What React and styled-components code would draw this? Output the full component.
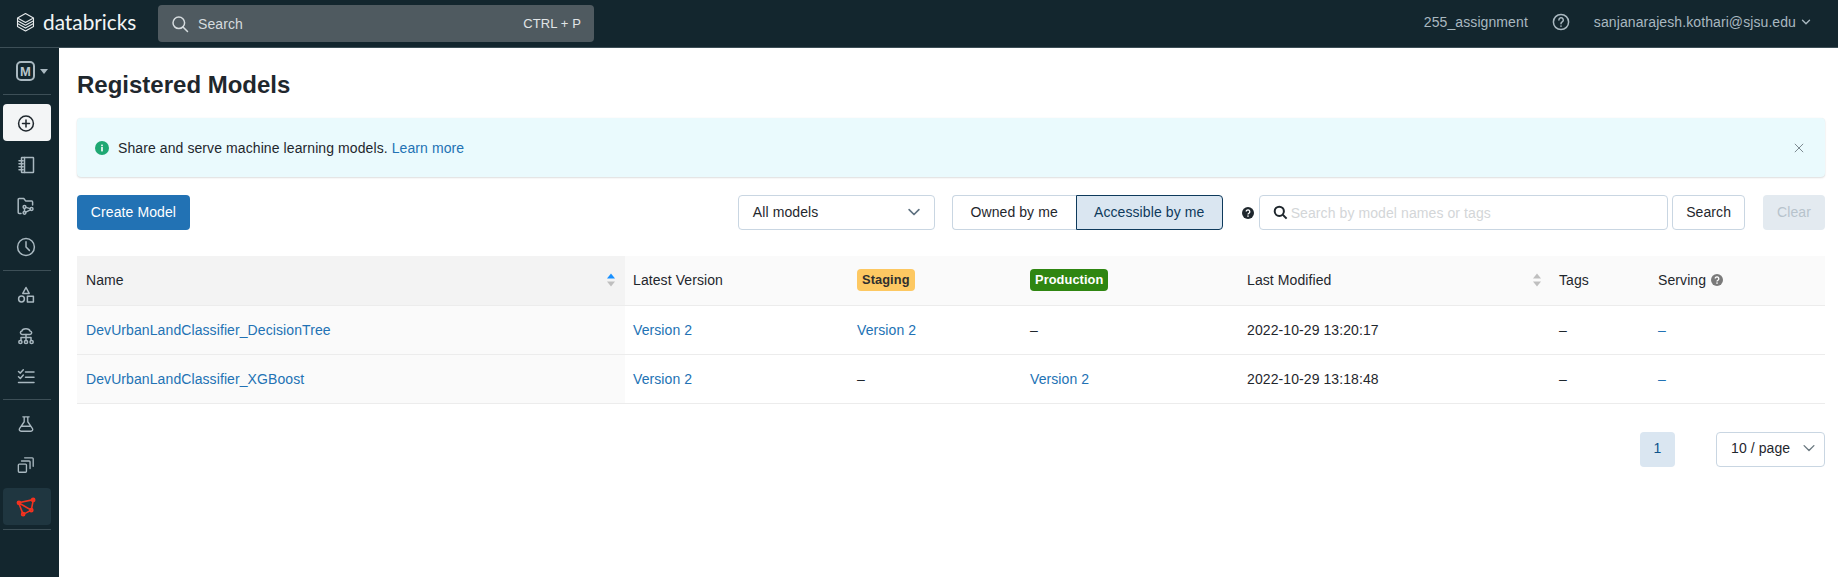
import React from "react";
import styled, { createGlobalStyle } from "styled-components";

const Global = createGlobalStyle`
  html, body { margin: 0; padding: 0; background: #fff; }
  body { font-family: "Liberation Sans", Arial, sans-serif; font-size: 14px; letter-spacing: .09px; color: #1f272d; }
  * { box-sizing: border-box; }
`;

const Page = styled.div`
  width: 1838px; height: 577px; overflow: hidden;
  display: flex; flex-direction: column;
`;
const TopBar = styled.header`
  height: 48px; flex: none; background: #13262e; border-bottom: 1px solid #3d4f57;
  display: flex; align-items: center; padding: 0 27px 3px 16px;
`;
const Logo = styled.div`
  width: 142px; flex: none; display: flex; align-items: center; gap: 8px; color: #f2f5f6;
`;
const LogoText = styled.span`
  font-family: Lato, sans-serif; font-size: 20.8px; letter-spacing: 0; font-weight: 400;
  line-height: 24px;
`;
const GlobalSearch = styled.div`
  width: 436px; height: 37px; margin-top: 3px; border-radius: 4px; background: #4f5a60;
  display: flex; align-items: center; padding: 0 13px; color: #d6dcdf;
  font-size: 14px; gap: 9px;
`;
const Shortcut = styled.span`
  margin-left: auto; font-size: 13px; color: #e1e5e7;
`;
const TopRight = styled.div`
  margin-left: auto; display: flex; align-items: center; color: #a9b8c0; font-size: 14px;
`;
const Workspace = styled.span` margin-right: 24px; `;
const HelpWrap = styled.span` display: flex; margin-right: 24px; `;
const Caret = styled.span` display: flex; margin-left: 5px; `;

const Body = styled.div` flex: 1; display: flex; min-height: 0; `;
const Sidebar = styled.nav`
  width: 59px; flex: none; background: #13262e; padding: 0 8px 0 3px;
  display: flex; flex-direction: column; align-items: stretch;
`;
const Persona = styled.div`
  height: 46px; display: flex; align-items: center; padding: 0 0 0 13px; gap: 5px; color: #a9b8c0;
`;
const PersonaBox = styled.span`
  width: 19px; height: 20px; border: 2px solid #a9b8c0; border-radius: 5px; color: #b9c5cb;
  display: flex; align-items: center; justify-content: center;
  font-size: 13px; font-weight: 700; line-height: 1; letter-spacing: 0;
`;
const PersonaCaret = styled.span`
  width: 0; height: 0; border-left: 4px solid transparent; border-right: 4px solid transparent;
  border-top: 5px solid #a9b8c0;
`;
const Divider = styled.div` height: 1px; flex: none; background: #3d4f57; margin-top: ${p => p.$mt || 0}px; `;
const NavItem = styled.div`
  height: 37px; margin-top: ${p => p.$mt ?? 4}px; border-radius: 4px; flex: none; padding-right: 2px;
  display: flex; align-items: center; justify-content: center;
  color: ${p => (p.$current ? "#1f272d" : p.$active ? "#f4321f" : "#a9b8c0")};
  background: ${p => (p.$current ? "#f3f5f6" : p.$active ? "#1f3640" : "transparent")};
`;

const Main = styled.main` flex: 1; padding: 0 13px 0 18px; min-width: 0; `;
const Title = styled.h1`
  margin: 23px 0 0; font-size: 24px; line-height: 28px; font-weight: 700; color: #1f272d; letter-spacing: 0;
`;
const Alert = styled.div`
  margin-top: 19px; height: 59px; background: #eafafd; border-radius: 4px;
  box-shadow: 0 1px 2px rgba(0,0,0,.13), 0 0 1px rgba(0,0,0,.08);
  display: flex; align-items: center; padding: 0 21px 0 18px; gap: 9px; color: #1f272d;
`;
const Link = styled.a` color: #2272b4; text-decoration: none; `;
const CloseBtn = styled.span` margin-left: auto; display: flex; color: #7d8a91; `;
const Toolbar = styled.div` margin-top: 18px; display: flex; align-items: center; height: 35px; `;
const Primary = styled.button`
  width: 113px; height: 35px; padding: 0 0 2px; border: 0; border-radius: 4px; background: #2272b4; color: #fff;
  font: 14px "Liberation Sans", sans-serif; letter-spacing: .09px;
`;
const Select = styled.div`
  margin-left: 548px; width: 197px; height: 35px; border: 1px solid #c9d6e2; border-radius: 4px;
  display: flex; align-items: center; justify-content: space-between; padding: 0 13px 2px 14px; color: #1f272d;
`;
const SelectChev = styled.span` display: flex; color: #5f7281; `;
const Segment = styled.div` margin-left: 17px; display: flex; height: 35px; `;
const SegBtn = styled.button`
  height: 35px; width: ${p => p.$w}px; padding: 0 0 2px; font: 14px "Liberation Sans", sans-serif; letter-spacing: .09px;
  color: ${p => (p.$on ? "#0e3a5c" : "#1f272d")};
  background: ${p => (p.$on ? "#dae6f1" : "#fff")};
  border: 1px solid ${p => (p.$on ? "#0e3a5c" : "#c9d6e2")};
  border-radius: ${p => (p.$on ? "0 4px 4px 0" : "4px 0 0 4px")};
  ${p => !p.$on && "border-right: 0;"}
`;
const QMark = styled.span` margin-left: 19px; width: 12px; display: flex; color: #1f272d; `;
const SearchInput = styled.div`
  margin-left: 5px; width: 410px; height: 35px; border: 1px solid #c9d6e2; border-radius: 4px;
  display: flex; align-items: center; padding: 0 13px 0 13px; gap: 3px; color: #d3d6d8;
`;
const Secondary = styled.button`
  margin-left: 4px; width: 73px; height: 35px; padding: 0 0 2px; background: #fff; border: 1px solid #c9d6e2; border-radius: 4px;
  font: 14px "Liberation Sans", sans-serif; letter-spacing: .09px; color: #1f272d;
`;
const Disabled = styled.button`
  margin-left: 18px; width: 62px; height: 35px; padding: 0 0 2px; border: 0; background: #e3eaf0; border-radius: 4px;
  font: 14px "Liberation Sans", sans-serif; letter-spacing: .09px; color: #b7c3cc;
`;

const Table = styled.table`
  margin-top: 26px; width: 1748px; table-layout: fixed; border-collapse: collapse;
`;
const Th = styled.th`
  height: 49px; padding: 0 8px 0 ${p => (p.$sorted ? 9 : 8)}px; text-align: left; font-weight: 400; color: #1f272d;
  background: ${p => (p.$sorted ? "#f3f3f3" : "#fafafa")};
  border-bottom: 1px solid #ececec; position: relative;
`;
const Td = styled.td`
  height: 49px; padding: 0 8px 0 ${p => (p.$sorted ? 9 : 8)}px; color: #1f272d;
  background: ${p => (p.$sorted ? "#fafafa" : "#fff")};
  border-bottom: 1px solid #ececec;
`;
const SortIcon = styled.span`
  position: absolute; right: ${p => p.$r}px; top: 50%; transform: translateY(-50%);
  display: flex; flex-direction: column; gap: 3px;
`;
const Tri = styled.span`
  width: 0; height: 0; border-left: 4.5px solid transparent; border-right: 4.5px solid transparent;
  ${p => (p.$up ? "border-bottom" : "border-top")}: 5px solid ${p => p.$c};
`;
const Tag = styled.span`
  display: inline-block; height: 22px; line-height: 22px; padding: 0 5px; border-radius: 4px;
  font-size: 12.8px; font-weight: 700;
  background: ${p => p.$bg}; color: ${p => p.$fg};
`;
const ServingHelp = styled.span` display: inline-flex; vertical-align: -1px; margin-left: 5px; color: #7a7a7a; `;
const Pager = styled.div` margin-top: 28px; display: flex; justify-content: flex-end; align-items: center; `;
const PageNum = styled.div`
  width: 35px; height: 35px; padding-bottom: 2px; border-radius: 4px; background: #dae6f1; color: #0e538b;
  display: flex; align-items: center; justify-content: center;
`;
const PageSize = styled.div`
  margin-left: 41px; width: 109px; height: 35px; border: 1px solid #c9d6e2; border-radius: 4px;
  display: flex; align-items: center; justify-content: space-between; padding: 0 8px 2px 14px; color: #1f272d;
`;
const PageChev = styled.span` display: flex; color: #6b7980; `;

const S = { fill: "none", stroke: "currentColor", strokeWidth: 1.5, strokeLinecap: "round", strokeLinejoin: "round" };
const I = ({ size = 18, children, vb = "0 0 18 18" }) => <svg width={size} height={size} viewBox={vb} {...S}>{children}</svg>;

const DatabricksMark = () => (
  <svg width="19" height="20" viewBox="0 0 19 20" fill="none" stroke="#e6eaec" strokeWidth="1.1" strokeLinejoin="round">
    <path d="M9.5 1.5 17.5 6 9.5 10.5 1.5 6Z" />
    <path d="M1.5 6v2.8l8 4.5 8-4.5V6" />
    <path d="M1.5 8.8v2.8l8 4.5 8-4.5V8.8" />
    <path d="M1.5 11.6v2.8l8 4.5 8-4.5v-2.8" />
  </svg>
);
const SearchGlyph = () => <I size={18}><circle cx="7.8" cy="7.8" r="5.8" /><path d="m12 12 4.5 4.5" /></I>;
const HelpGlyph = () => (
  <I size={18}><circle cx="9" cy="9" r="7.6" /><path d="M6.9 7a2.2 2.2 0 1 1 3.3 1.9c-.8.5-1.2.9-1.2 1.8" /><path d="M9 13.1v.1" /></I>
);
const Chev = ({ size = 10, w = 1.4 }) => (
  <svg width={size} height={size} viewBox="0 0 10 10" fill="none" stroke="currentColor" strokeWidth={w} strokeLinecap="round" strokeLinejoin="round"><path d="M1.5 3.3 5 6.8l3.5-3.5" /></svg>
);
const PlusIcon = () => <I><circle cx="9" cy="9.5" r="7.4" /><path d="M9 6v7M5.5 9.5h7" /></I>;
const NotebookIcon = () => <I><rect x="4.5" y="1.5" width="12" height="15" rx=".5" /><path d="M7.5 1.5v15M2 4.8h4M2 7.8h4M2 10.8h4M2 13.8h4" /></I>;
const RepoIcon = () => (
  <I><path d="M4 16.5H2.2a1 1 0 0 1-1-1V2.5a1 1 0 0 1 1-1h4.6l1.8 2.4h6a1 1 0 0 1 1 1V8" /><circle cx="7.5" cy="10" r="1.4" /><circle cx="7.5" cy="15.8" r="1.4" /><circle cx="14.6" cy="12" r="1.4" /><path d="M7.5 11.4v3M13.4 12.8l-4.7 2.3M8.9 10.4l4.3 1.2" /></I>
);
const ClockIcon = () => <I size={20} vb="0 0 20 20"><circle cx="10" cy="10" r="8.4" /><path d="M10 4.8V10l3.4 3.4" /></I>;
const ShapesIcon = () => <I><path d="M9 1.5 12.2 7.4H5.8Z" /><circle cx="4.5" cy="13" r="2.9" /><rect x="10.4" y="10.2" width="6" height="5.8" /></I>;
const FeatureIcon = () => (
  <I><path d="M5 7.5C3 7 2.8 4.4 5 4c.4-2.8 7.2-3 8 0 2.3.5 2.2 3 0 3.5Z" /><path d="M9 7.5V13M4 13v-2.5h10V13" /><circle cx="3.4" cy="15" r="1.6" /><circle cx="9" cy="15" r="1.6" /><circle cx="14.6" cy="15" r="1.6" /></I>
);
const TasksIcon = () => <I><path d="m1.5 3.5 1.8 1.6 3-3.4M1.5 8.8l1.8 1.6 3-3.4M8.5 4H17M8.5 9.2H17M1.5 14.5H17" /></I>;
const FlaskIcon = () => <I size={18} vb="0 0 20 20"><path d="M6.5 2h7M8 2v5.5L2.8 15.2C2 16.6 3 18 4.5 18h11c1.5 0 2.5-1.4 1.7-2.8L12 7.5V2M5.2 12.5h9.6" /></I>;
const CopiesIcon = () => <I size={18} vb="0 0 20 20"><rect x="1.5" y="9" width="9" height="9" rx="1" /><path d="M5 5.5h8.5a1 1 0 0 1 1 1V14M8.5 2h8.5a1 1 0 0 1 1 1v8.5" /></I>;
const ModelIcon = () => (
  <I size={20} vb="0 0 19 19"><path d="M2.5 5.5 16.5 2.5 14.5 12.5 6.8 16.5Z M2.5 5.5 14.5 12.5" /><circle cx="2.8" cy="5.5" r="1.5" /><circle cx="16.3" cy="2.8" r="1.5" /><circle cx="14.5" cy="12.5" r="1.5" /><circle cx="6.8" cy="16.3" r="1.5" /></I>
);
const InfoDot = () => (
  <svg width="14" height="14" viewBox="0 0 14 14"><circle cx="7" cy="7" r="7" fill="#1fa873" /><rect x="6.2" y="6" width="1.6" height="4.4" fill="#fff" /><rect x="6.2" y="3.6" width="1.6" height="1.6" fill="#fff" /></svg>
);
const CloseIcon = () => <svg width="10" height="10" viewBox="0 0 12 12" fill="none" stroke="currentColor" strokeWidth="1.2"><path d="m1 1 10 10M11 1 1 11" /></svg>;
const QFill = ({ size = 12 }) => (
  <svg width={size} height={size} viewBox="0 0 12 12"><circle cx="6" cy="6" r="6" fill="currentColor" /><path d="M4.2 4.6a1.8 1.8 0 1 1 2.7 1.6c-.6.35-.9.6-.9 1.2" fill="none" stroke="#fff" strokeWidth="1.3" /><rect x="5.3" y="8.4" width="1.4" height="1.4" fill="#fff" /></svg>
);
const SearchSolid = () => <svg width="15" height="15" viewBox="0 0 15 15" fill="none" stroke="#1f272d" strokeWidth="2"><circle cx="6.3" cy="6.3" r="4.6" /><path d="m9.8 9.8 3.8 3.8" /></svg>;

const columns = [548, 224, 173, 217, 312, 99, 175];
const rows = [
  { name: "DevUrbanLandClassifier_DecisionTree", latest: "Version 2", staging: "Version 2", production: null, date: "2022-10-29 13:20:17" },
  { name: "DevUrbanLandClassifier_XGBoost", latest: "Version 2", staging: null, production: "Version 2", date: "2022-10-29 13:18:48" },
];
const VersionCell = ({ v }) => <Td>{v ? <Link>{v}</Link> : "–"}</Td>;

export default function App() {
  return (
    <Page>
      <Global />
      <TopBar>
        <Logo><DatabricksMark /><LogoText>databricks</LogoText></Logo>
        <GlobalSearch><SearchGlyph />Search<Shortcut>CTRL + P</Shortcut></GlobalSearch>
        <TopRight>
          <Workspace>255_assignment</Workspace>
          <HelpWrap><HelpGlyph /></HelpWrap>
          sanjanarajesh.kothari@sjsu.edu
          <Caret><Chev /></Caret>
        </TopRight>
      </TopBar>
      <Body>
        <Sidebar>
          <Persona><PersonaBox>M</PersonaBox><PersonaCaret /></Persona>
          <Divider />
          <NavItem $current $mt={9}><PlusIcon /></NavItem>
          <NavItem $mt={5}><NotebookIcon /></NavItem>
          <NavItem><RepoIcon /></NavItem>
          <NavItem><ClockIcon /></NavItem>
          <Divider $mt={5} />
          <NavItem $mt={5}><ShapesIcon /></NavItem>
          <NavItem><FeatureIcon /></NavItem>
          <NavItem><TasksIcon /></NavItem>
          <Divider $mt={4} />
          <NavItem $mt={5}><FlaskIcon /></NavItem>
          <NavItem><CopiesIcon /></NavItem>
          <NavItem $active $mt={5}><ModelIcon /></NavItem>
          <Divider $mt={4} />
        </Sidebar>
        <Main>
          <Title>Registered Models</Title>
          <Alert>
            <InfoDot />
            <span>Share and serve machine learning models. <Link>Learn more</Link></span>
            <CloseBtn><CloseIcon /></CloseBtn>
          </Alert>
          <Toolbar>
            <Primary>Create Model</Primary>
            <Select>All models<SelectChev><Chev size={14} w={1.2} /></SelectChev></Select>
            <Segment>
              <SegBtn $w={124}>Owned by me</SegBtn>
              <SegBtn $w={147} $on>Accessible by me</SegBtn>
            </Segment>
            <QMark><QFill /></QMark>
            <SearchInput><SearchSolid />Search by model names or tags</SearchInput>
            <Secondary>Search</Secondary>
            <Disabled>Clear</Disabled>
          </Toolbar>
          <Table>
            <colgroup>{columns.map((w, i) => <col key={i} style={{ width: w }} />)}</colgroup>
            <thead>
              <tr>
                <Th $sorted>Name<SortIcon $r={10}><Tri $up $c="#1890ff" /><Tri $c="#bfbfbf" /></SortIcon></Th>
                <Th>Latest Version</Th>
                <Th><Tag $bg="#fdc862" $fg="#2f2f2f">Staging</Tag></Th>
                <Th><Tag $bg="#2f8611" $fg="#fff">Production</Tag></Th>
                <Th>Last Modified<SortIcon $r={10}><Tri $up $c="#bfbfbf" /><Tri $c="#bfbfbf" /></SortIcon></Th>
                <Th>Tags</Th>
                <Th>Serving<ServingHelp><QFill size={12} /></ServingHelp></Th>
              </tr>
            </thead>
            <tbody>
              {rows.map(r => (
                <tr key={r.name}>
                  <Td $sorted><Link>{r.name}</Link></Td>
                  <VersionCell v={r.latest} />
                  <VersionCell v={r.staging} />
                  <VersionCell v={r.production} />
                  <Td>{r.date}</Td>
                  <Td>–</Td>
                  <Td><Link>–</Link></Td>
                </tr>
              ))}
            </tbody>
          </Table>
          <Pager>
            <PageNum>1</PageNum>
            <PageSize>10 / page<PageChev><Chev size={14} w={1} /></PageChev></PageSize>
          </Pager>
        </Main>
      </Body>
    </Page>
  );
}
